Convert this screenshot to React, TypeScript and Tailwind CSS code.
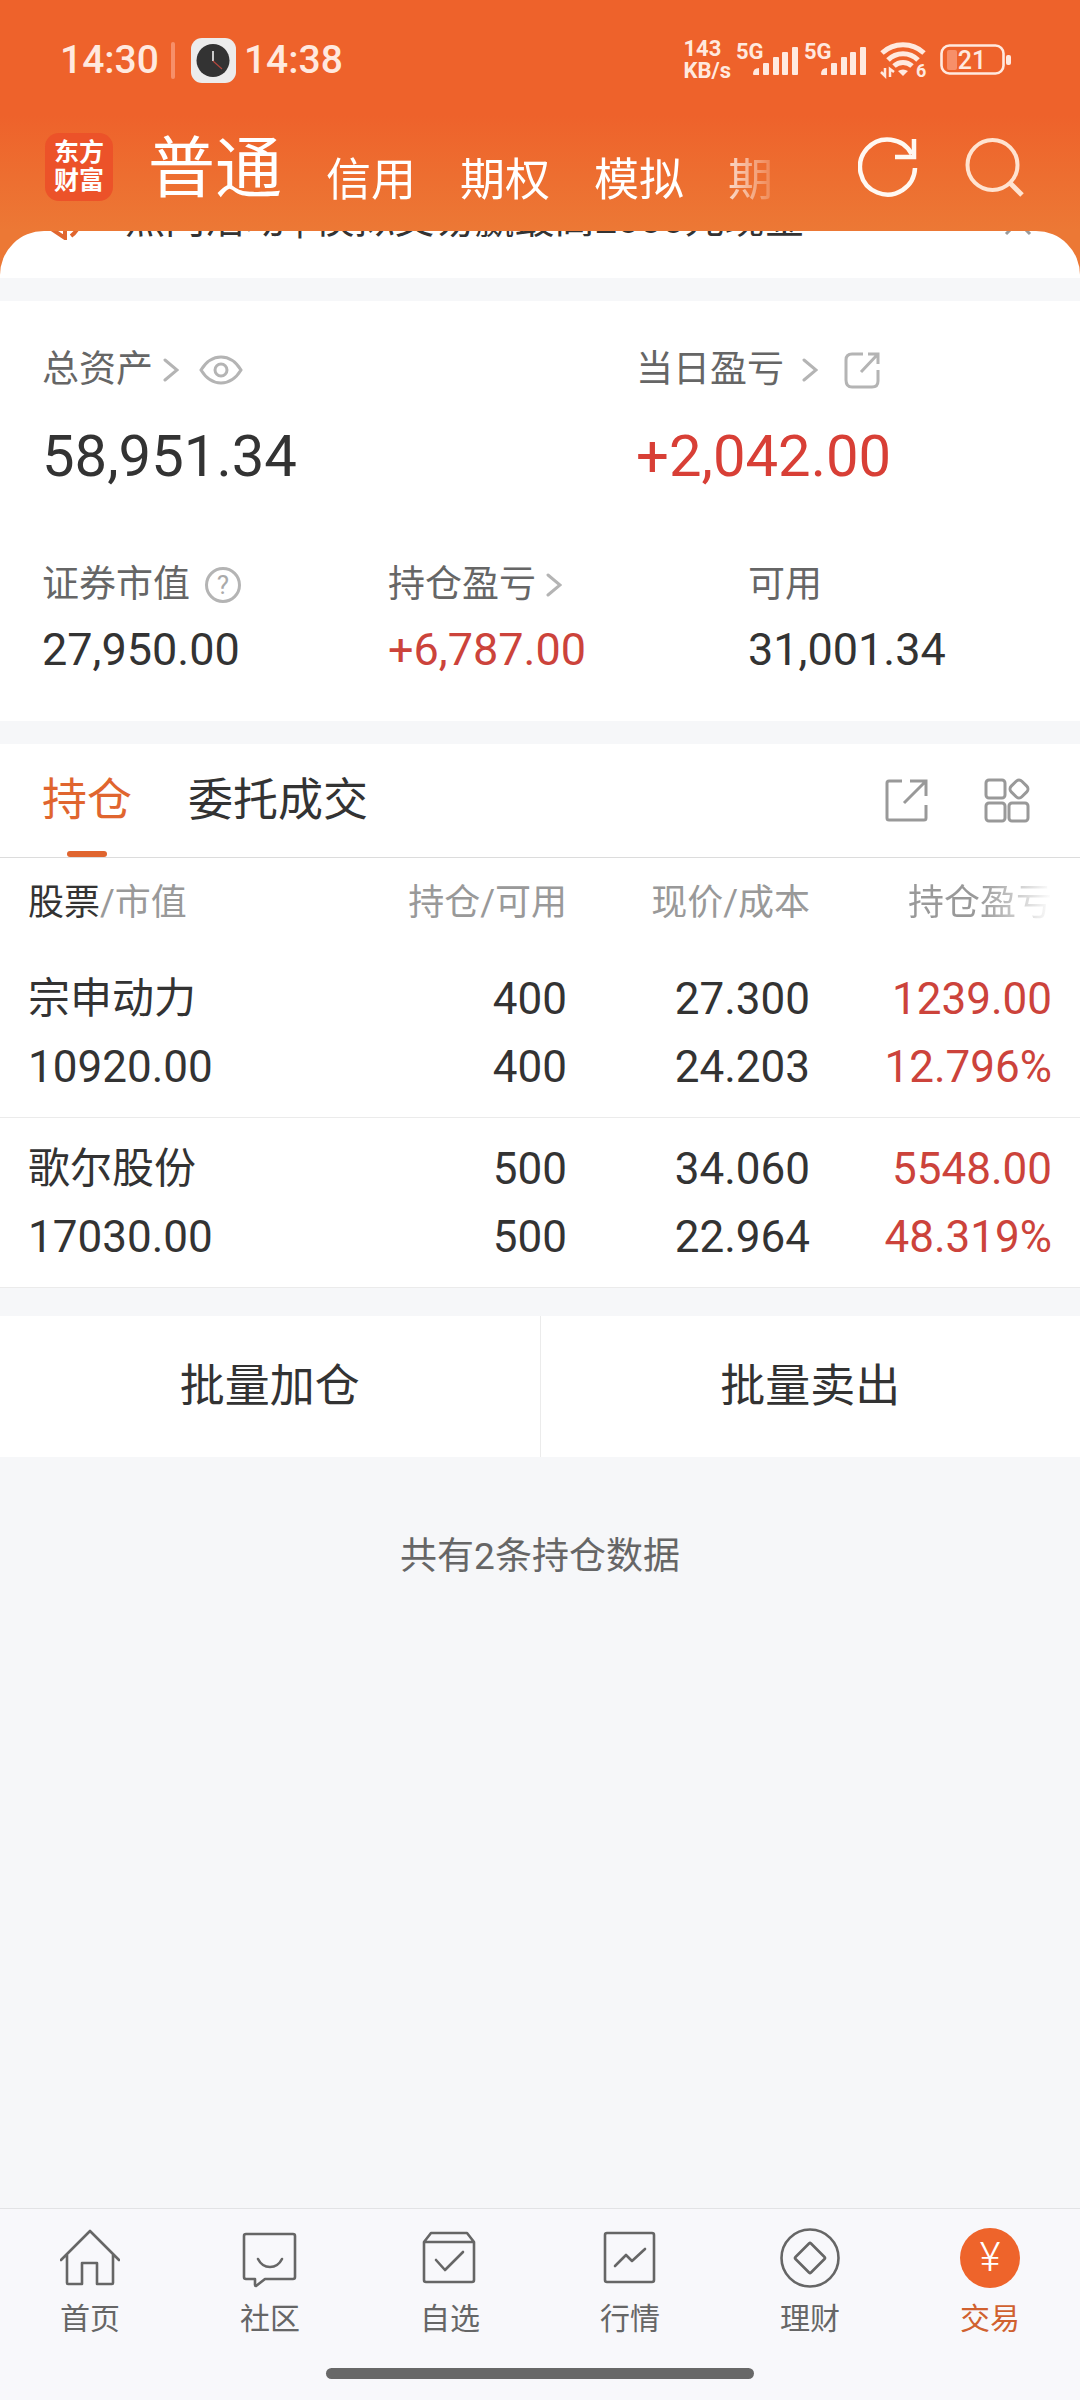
import type { ReactNode } from 'react';

const accountTabs = ['信用', '期权', '模拟', '期'];

const holdings = [
  { name: '宗申动力', value: '10920.00', total: '400', usable: '400', price: '27.300', cost: '24.203', profit: '1239.00', rate: '12.796%' },
  { name: '歌尔股份', value: '17030.00', total: '500', usable: '500', price: '34.060', cost: '22.964', profit: '5548.00', rate: '48.319%' },
];

const Chevron = () => (
  <svg width="16" height="24" viewBox="0 0 16 24" fill="none" stroke="#b4b4b4" strokeWidth="3" strokeLinecap="round" aria-hidden="true">
    <path d="M2 2L14 12L2 22" />
  </svg>
);

const Signal = () => (
  <svg className="overflow-visible" width="63" height="36" viewBox="0 0 63 36" fill="#ffe9df" aria-hidden="true">
    <text x="0" y="17" fontSize="22" fontWeight="700">5G</text>
    <path d="M17 32Q17 26 23 26V33H18Q17 33 17 32Z" />
    <rect x="27" y="21" width="6" height="12" rx="1" />
    <rect x="37" y="15" width="6" height="18" rx="1" />
    <rect x="46" y="10" width="6" height="23" rx="1" />
    <rect x="56" y="5" width="6" height="28" rx="1" />
  </svg>
);

const StatusBar = () => (
  <div className="flex h-[120px] items-center justify-between pr-[68px] pl-[60px] text-[#ffe9df]">
    <div className="flex items-center text-[39px] leading-[48px] font-medium">
      <span>14:30</span>
      <span className="mx-3 h-[37px] w-1 rounded-full bg-[#f78f69]" />
      <svg className="ml-1" width="45" height="45" viewBox="0 0 45 45" fill="none" aria-hidden="true">
        <rect width="45" height="45" rx="11" fill="#ececec" />
        <circle cx="22" cy="22.500" r="16.500" fill="#333" />
        <path d="M22 13V23" stroke="#fff" strokeWidth="1.500" />
        <path d="M22 23L31 31" stroke="#b5463d" strokeWidth="1.200" />
      </svg>
      <span className="ml-2">14:38</span>
    </div>
    <div className="flex items-center gap-[5px]">
      <div className="text-[22px] leading-[22px] font-bold">
        <p>143</p>
        <p>KB/s</p>
      </div>
      <Signal />
      <Signal />
      <svg className="ml-[7px] overflow-visible" width="48" height="38" viewBox="0 0 48 38" fill="none" stroke="#ffe9df" aria-hidden="true">
        <path d="M3 12A31 31 0 0 1 45 12" strokeWidth="5" />
        <path d="M9 19A21 21 0 0 1 39 19" strokeWidth="5" />
        <path d="M15 25A13 13 0 0 1 33 25" strokeWidth="5" />
        <path d="M19 30Q24 27 29 30L24 35Z" fill="#ffe9df" stroke="none" />
        <path d="M6 27V35L2 31M11 36V28L15 31" strokeWidth="2.500" />
        <text x="37" y="36" fontSize="18" fontWeight="700" fill="#ffe9df" stroke="none">6</text>
      </svg>
      <svg className="ml-2" width="72" height="32" viewBox="0 0 72 32" fill="none" aria-hidden="true">
        <rect x="1.500" y="1.500" width="62" height="28" rx="8" stroke="#ffe9df" strokeWidth="2.600" />
        <rect x="7" y="6" width="10" height="20" rx="2" fill="#f78f69" />
        <rect x="66" y="11" width="5" height="10" rx="2" fill="#ffe9df" />
        <text x="32" y="25" fontSize="25" fontWeight="500" textAnchor="middle" fill="#ffe9df">21</text>
      </svg>
    </div>
  </div>
);

const Header = () => (
  <header className="bg-linear-to-b from-[#ee622b] from-50% to-[#ec7835] to-100% pb-[17px]">
    <StatusBar />
    <div className="flex h-[94px] items-center pr-14 pl-[45px]">
      <div className="flex size-[68px] shrink-0 flex-col items-center justify-center rounded-[14px] bg-[#ec5229] text-[25px] leading-[28px] font-bold text-white">
        <span>东方</span>
        <span>财富</span>
      </div>
      <nav className="mr-[73px] ml-[35px] flex min-w-0 flex-1 items-end gap-11 overflow-hidden pt-3 pb-2 whitespace-nowrap text-white [mask-image:linear-gradient(to_right,black_88%,transparent)]">
        <a href="#normal" className="text-[67px] leading-[70px]">普通</a>
        {accountTabs.map((tab) => (
          <a key={tab} href={`#${tab}`} className="text-[45px] leading-[46px]">{tab}</a>
        ))}
      </nav>
      <div className="flex items-center gap-[46px]">
        <button type="button" aria-label="刷新">
          <svg width="60" height="60" viewBox="0 0 60 60" fill="none" stroke="#fff8f2" strokeWidth="4.500">
            <path d="M53.800 17.100A27.500 27.500 0 1 0 57 31" />
            <path d="M56 2V20H37" />
          </svg>
        </button>
        <button type="button" aria-label="搜索">
          <svg width="60" height="60" viewBox="0 0 60 60" fill="none" stroke="#ffe3d0" strokeWidth="4">
            <circle cx="28.500" cy="28" r="25" />
            <path d="M46 46L58 58" strokeWidth="5" />
          </svg>
        </button>
      </div>
    </div>
  </header>
);

// Announcement strip, scrolled most of the way under the header
const Notice = () => (
  <div className="bg-[#ec7835]">
    <div className="flex h-[47px] items-end overflow-hidden rounded-t-[44px] bg-white pr-12 pb-[38px] pl-10 text-[40px] leading-[40px] text-[#333]">
      <svg className="mr-[43px] shrink-0" width="42" height="42" viewBox="0 0 42 42" fill="none" stroke="#e0662f" strokeWidth="4" aria-hidden="true">
        <path d="M2 12V30H10L25 40V2L10 12ZM31 38Q42 30 40 14" />
      </svg>
      <p className="flex-1 whitespace-nowrap">热门活动 | 模拟交易赢最高2000元现金</p>
      <svg className="mb-1 shrink-0" width="28" height="28" viewBox="0 0 28 28" fill="none" stroke="#999" strokeWidth="3" aria-hidden="true">
        <path d="M2 2L26 26M26 2L2 26" />
      </svg>
    </div>
  </div>
);

const Assets = () => (
  <section className="mt-[23px] bg-white px-[42px] pt-[45px] pb-[41px] text-[#333]">
    <div className="grid grid-cols-[594fr_402fr]">
      <div>
        <div className="flex h-12 items-center text-[37px] leading-[48px] text-[#666]">
          总资产
          <span className="ml-2.5"><Chevron /></span>
          <button type="button" aria-label="隐藏金额" className="ml-5">
            <svg width="44" height="30" viewBox="0 0 44 30" fill="none" stroke="#b4b4b4" strokeWidth="3">
              <path d="M2 15Q10 2 22 2T42 15Q34 28 22 28T2 15Z" />
              <circle cx="22" cy="15" r="6" />
            </svg>
          </button>
        </div>
        <p className="mt-[26px] text-[58px] leading-[72px]">58,951.34</p>
      </div>
      <div>
        <div className="flex h-12 items-center text-[37px] leading-[48px] text-[#666]">
          当日盈亏
          <span className="ml-[18px]"><Chevron /></span>
          <button type="button" aria-label="分享盈亏" className="ml-[26px]">
            <svg width="36" height="37" viewBox="0 0 36 37" fill="none" stroke="#b4b4b4" strokeWidth="3">
              <path d="M19 2H8Q2 2 2 8V28Q2 35 8 35H28Q34 35 34 29V18" />
              <path d="M24 2H34V12M33 3L17 20" />
            </svg>
          </button>
        </div>
        <p className="mt-[26px] text-[58px] leading-[72px] text-[#d83f36]">+2,042.00</p>
      </div>
    </div>
    <div className="mt-[69px] grid grid-cols-[346fr_360fr_290fr] text-[45px] leading-[60px]">
      <div>
        <div className="flex h-12 items-center text-[37px] leading-[48px] text-[#666]">
          证券市值
          <button type="button" aria-label="说明" className="ml-[15px] flex size-9 items-center justify-center rounded-full border-[3px] border-[#b4b4b4] text-[26px] leading-[28px] text-[#aaa]">?</button>
        </div>
        <p className="mt-[11px]">27,950.00</p>
      </div>
      <div>
        <div className="flex h-12 items-center gap-2.5 text-[37px] leading-[48px] text-[#666]">
          持仓盈亏
          <Chevron />
        </div>
        <p className="mt-[11px] text-[#cc433b]">+6,787.00</p>
      </div>
      <div>
        <div className="flex h-12 items-center text-[37px] leading-[48px] text-[#666]">可用</div>
        <p className="mt-[11px]">31,001.34</p>
      </div>
    </div>
  </section>
);

const Cell = ({ top, bottom, className }: { top: string; bottom: string; className?: string }) => (
  <td className={className}>
    <span className="block">{top}</span>
    <span className="block">{bottom}</span>
  </td>
);

const Holdings = () => (
  <section className="mt-[23px] bg-white">
    <div className="flex h-[114px] items-stretch border-b border-[#dcdcdc] pr-[49px] pl-[42px] text-[45px] leading-[113px] text-[#333]">
      <button type="button" className="flex flex-col items-center text-[#e0652f]">
        持仓
        <span className="-mt-1.5 h-1.5 w-10 rounded-full bg-[#e0652f]" />
      </button>
      <button type="button" className="ml-14 flex">委托成交</button>
      <div className="ml-auto flex items-center gap-[55px]">
        <button type="button" aria-label="分享持仓">
          <svg width="44" height="44" viewBox="0 0 44 44" fill="none" stroke="#999" strokeWidth="3">
            <path d="M17 2H4Q2 2 2 4V39Q2 41 4 41H39Q41 41 41 39V26" />
            <path d="M25 2H41V17M40 3L19 24" />
          </svg>
        </button>
        <button type="button" aria-label="更多功能">
          <svg width="47" height="46" viewBox="0 0 47 46" fill="none" stroke="#999" strokeWidth="3">
            <rect x="2" y="2" width="19" height="18" rx="3" />
            <rect x="2" y="25" width="19" height="18" rx="3" />
            <rect x="25" y="25" width="19" height="18" rx="3" />
            <rect x="27.500" y="3.500" width="15" height="15" rx="4" transform="rotate(45 35 11)" />
          </svg>
        </button>
      </div>
    </div>
    <table className="w-full table-fixed text-right text-[44px] leading-[68px] text-[#333]">
      <thead className="text-[36px] leading-[90px] text-[#999]">
        <tr>
          <th className="w-[27%] pl-7 text-left font-normal whitespace-nowrap"><span className="text-[#333]">股票</span>/市值</th>
          <th className="w-[25.5%] font-normal">持仓/可用</th>
          <th className="w-[22.5%] font-normal">现价/成本</th>
          <th className="w-[25%] pr-7 font-normal">
            <span className="bg-linear-to-r from-[#999] from-50% to-white bg-clip-text text-transparent">持仓盈亏</span>
          </th>
        </tr>
      </thead>
      <tbody>
        {holdings.map((item) => (
          <tr key={item.name} className="border-b border-[#ebebeb]">
            <td className="pt-[17px] pb-4 pl-7 text-left">
              <span className="block text-[42px]">{item.name}</span>
              <span className="block">{item.value}</span>
            </td>
            <Cell top={item.total} bottom={item.usable} />
            <Cell top={item.price} bottom={item.cost} />
            <Cell top={item.profit} bottom={item.rate} className="pr-7 text-[#cc433b]" />
          </tr>
        ))}
      </tbody>
    </table>
  </section>
);

const NavItem = ({ label, children }: { label: string; children: ReactNode }) => (
  <a href={`#${label}`} className="flex flex-1 flex-col items-center">
    <svg width="60" height="62" viewBox="0 0 60 62" fill="none" stroke="#666" strokeWidth="2.600" strokeLinecap="round" strokeLinejoin="round" aria-hidden="true">
      {children}
    </svg>
    <span className="mt-2.5">{label}</span>
  </a>
);

const BottomNav = () => (
  <footer className="mt-auto border-t border-[#e2e3e5] bg-[#f8f8fb]">
    <nav className="flex pt-[18px] text-[30px] leading-[40px] text-[#666]">
      <NavItem label="首页">
        <path d="M1 33L30 4L59 33M7 28V56Q7 57 8 57H22V36H37V57H52Q53 57 53 56V28" />
      </NavItem>
      <NavItem label="社区">
        <path d="M6 7H53Q55 7 55 9V50Q55 52 53 52H25L16 59Q15 59 15 58V52H6Q4 52 4 50V9Q4 7 6 7Z" />
        <path d="M18 32Q22 40 30 40T42 32" />
      </NavItem>
      <NavItem label="自选">
        <path d="M4 15L11 6H47L54 15V53Q54 55 52 55H6Q4 55 4 53ZM4 15H54M16 33L25 43L43 25" />
      </NavItem>
      <NavItem label="行情">
        <rect x="5" y="6" width="49" height="49" rx="2" />
        <path d="M15 39L26 28L32 34L45 22" />
      </NavItem>
      <NavItem label="理财">
        <circle cx="30" cy="31" r="28.500" />
        <path d="M29 16.500Q30 15.500 31 16.500L44.500 30Q45.500 31 44.500 32L31 45.500Q30 46.500 29 45.500L15.500 32Q14.500 31 15.500 30Z" />
      </NavItem>
      <a href="#trade" className="flex flex-1 flex-col items-center text-[#d0612f]">
        <span className="flex h-[62px] items-center">
          <span className="flex size-[60px] items-center justify-center rounded-full bg-[#ee642b] text-[40px] font-light text-white">¥</span>
        </span>
        <span className="mt-2.5">交易</span>
      </a>
    </nav>
    <div className="mx-auto mt-[29px] mb-[21px] h-[11px] w-[428px] rounded-full bg-[#686868]" />
  </footer>
);

const App = () => {
  return (
    <div className="flex min-h-screen flex-col bg-[#f6f7f9] font-[Roboto,'Noto_Sans_CJK_SC',sans-serif]">
      <Header />
      <Notice />
      <Assets />
      <Holdings />
      <div className="mt-7 flex bg-white text-[45px] leading-[141px] text-[#333]">
        <button type="button" className="flex-1 border-r border-[#ebebeb]">批量加仓</button>
        <button type="button" className="flex-1">批量卖出</button>
      </div>
      <p className="mt-[76px] text-center text-[37px] leading-[48px] text-[#666]">共有2条持仓数据</p>
      <BottomNav />
    </div>
  );
};

export default App;
